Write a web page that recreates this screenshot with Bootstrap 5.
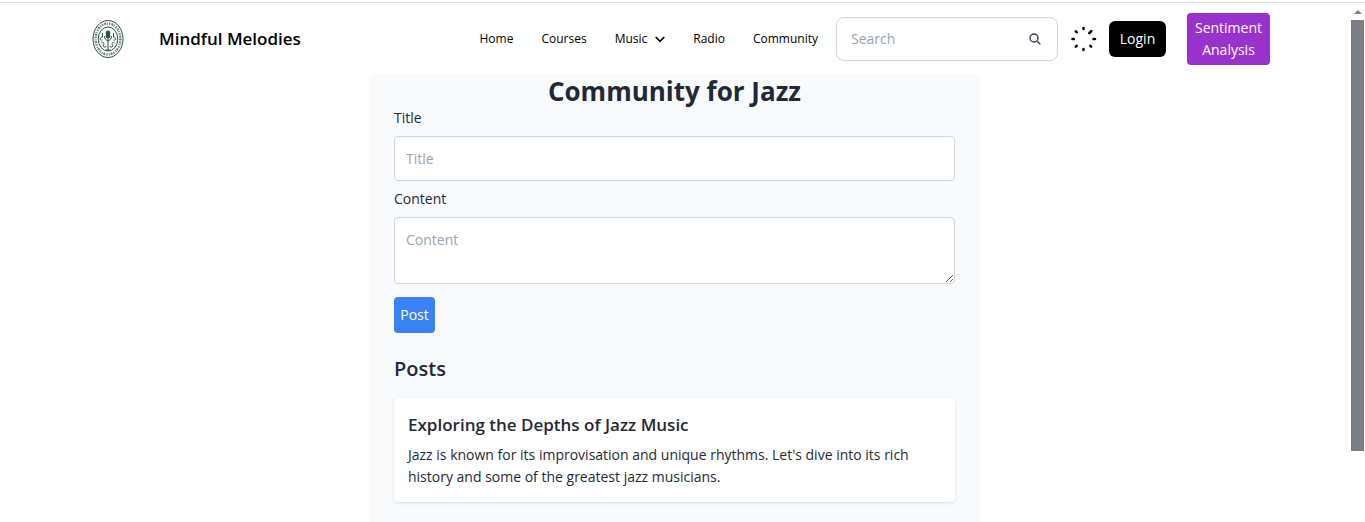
<!DOCTYPE html>
<html lang="en">
<head>
<meta charset="utf-8">
<meta name="viewport" content="width=device-width, initial-scale=1">
<title>Mindful Melodies</title>
<link href="https://cdn.jsdelivr.net/npm/bootstrap@5.3.0/dist/css/bootstrap.min.css" rel="stylesheet">
<style>
  html, body { height: 100%; overflow: hidden; }
  body { font-family: "Open Sans", "Noto Sans", sans-serif; font-size: 14px; line-height: 22px; color: #1f2937; background: #fff; }
  .top-rule { height: 3px; flex: none; border-top: 2px solid #fff; background: #e0e0e0; }
  .page-row { min-height: 0; }
  .site-header { height: 72px; flex: none; padding: 0 79px 0 92px; }
  .brand-name { font-size: 17px; line-height: 28px; font-weight: 600; color: #000; margin-left: 35px; }
  .site-links { gap: 28px; font-size: 12px; margin-right: 18px; }
  .site-links a { color: #000; text-decoration: none; }
  .search-box { width: 222px; height: 44px; border: 1px solid #d1d5db; border-radius: 8px; padding: 0 16px 0 14px; }
  .search-box input { border: 0; outline: 0; min-width: 0; padding: 0; background: none; }
  .search-box button { border: 0; padding: 0; background: none; display: flex; }
  ::placeholder { color: #9ca3af !important; opacity: 1; }
  .btn { font-size: 14px; line-height: 22px; border: 0; color: #fff; }
  .btn-login { background: #000; border-radius: 6px; width: 57px; height: 36px; padding: 0; }
  .btn-mood { background: #9932cc; border-radius: 4px; width: 83px; height: 52px; padding: 4px 0; margin-left: 21px; }
  .community { width: 609px; max-width: 100%; background: #f9fafb; padding: 0 24px; box-shadow: 0 1px 2px rgba(0,0,0,.06); }
  .community h1 { font-size: 26px; line-height: 31px; font-weight: 700; margin: 1px 0 0; }
  .community h2 { font-size: 20px; line-height: 28px; font-weight: 600; margin: 22px 0 15px; }
  .community h3 { font-size: 17px; line-height: 26px; font-weight: 600; margin: 0 0 6px; }
  .community .form-label { margin: 0 0 7px; display: block; }
  .community .form-control { font-size: 14px; line-height: 22px; padding: 11px; border: 1px solid #d1d5db; border-radius: 4px; min-height: 0; color: #1f2937; }
  .community input.form-control { height: 45px; margin-bottom: 7px; }
  .community textarea.form-control { height: 67px; margin-bottom: 13px; }
  .btn-post { background: #3b82f6; border-radius: 4px; width: 41px; height: 36px; padding: 0; }
  .post-item { background: #fff; border-radius: 4px; padding: 14px; box-shadow: 0 1px 3px rgba(0,0,0,.12); }
  .scroll-rail { width: 16px; flex: none; padding: 0 1px 0 2px; }
  .scroll-arrow { height: 17px; flex: none; display: flex; align-items: center; justify-content: center; }
  .scroll-thumb { height: 83%; background: #7b8087; }
</style>
</head>
<body class="d-flex flex-column">
<div class="top-rule"></div>
<div class="page-row d-flex flex-grow-1">
  <div class="d-flex flex-column flex-grow-1 overflow-hidden">
    <header class="site-header d-flex align-items-center">
      <a href="#" class="d-flex align-items-center text-decoration-none">
        <svg width="32" height="40" viewBox="0 0 32 40" fill="none" stroke="#2f5149" aria-hidden="true">
          <ellipse cx="16" cy="20" rx="15" ry="18.5" stroke-width="1"/>
          <ellipse cx="16" cy="20" rx="12.4" ry="15.5" stroke="#6d877f" stroke-width="2.4" stroke-dasharray="1.4 1 2 .8 1 1.2"/>
          <ellipse cx="16" cy="20" rx="9.8" ry="12" stroke-width="1"/>
          <rect x="13.8" y="11.5" width="4.4" height="8" rx="2.2" fill="#2f5149" stroke="none"/>
          <path d="M16 19v12M12.5 17c0 6 7 6 7 0M13.5 31h5M10.5 14v4c-3 0-3 4 0 3M21.500 14v4c3 0 3 4 0 3M9.500 24c2-1.500 3 0 2 2s2 3 3 1M22.500 24c-2-1.500-3 0-2 2s-2 3-3 1" stroke-width="1"/>
        </svg>
        <span class="brand-name">Mindful Melodies</span>
      </a>
      <nav class="site-links d-flex align-items-center ms-auto">
        <a href="#">Home</a>
        <a href="#">Courses</a>
        <a href="#" class="d-flex align-items-center">Music
          <svg class="ms-2" width="10" height="7" viewBox="0 0 10 7" fill="none" stroke="#000" stroke-width="1.700" aria-hidden="true"><path d="M.7 1 5 5.400 9.300 1"/></svg>
        </a>
        <a href="#">Radio</a>
        <a href="#">Community</a>
      </nav>
      <form class="search-box d-flex align-items-center">
        <input type="search" class="flex-grow-1" placeholder="Search" aria-label="Search">
        <button type="button" aria-label="Submit search">
          <svg width="12" height="12" viewBox="0 0 12 12" fill="none" stroke="#374151" stroke-width="1.400"><circle cx="5" cy="5" r="4"/><path d="m8 8 3.300 3.300"/></svg>
        </button>
      </form>
      <svg class="mx-2 px-1" width="35" height="26" viewBox="0 0 26 26" fill="none" stroke="#000" stroke-width="2.500" stroke-linecap="round" aria-hidden="true">
        <path d="M13 2v1M13 23v1M2 13h1.300M23 13h1.500M5.300 5.300l.9.900M18.800 7.200 20.800 5.200M5.300 20.700l.9-.9M19.800 19.800l.9.900"/>
      </svg>
      <button type="button" class="btn btn-login">Login</button>
      <button type="button" class="btn btn-mood">Sentiment Analysis</button>
    </header>
    <main class="community mx-auto flex-grow-1">
      <h1 class="text-center">Community for Jazz</h1>
      <form>
        <label class="form-label" for="post-title">Title</label>
        <input type="text" id="post-title" class="form-control" placeholder="Title">
        <label class="form-label" for="post-content">Content</label>
        <textarea id="post-content" class="form-control" placeholder="Content"></textarea>
        <button type="button" class="btn btn-post">Post</button>
      </form>
      <h2>Posts</h2>
      <article class="post-item">
        <h3>Exploring the Depths of Jazz Music</h3>
        <p class="mb-0">Jazz is known for its improvisation and unique rhythms. Let's dive into its rich history and some of the greatest jazz musicians.</p>
      </article>
    </main>
  </div>
  <div class="scroll-rail d-flex flex-column" aria-hidden="true">
    <div class="scroll-arrow"><svg width="8" height="4" viewBox="0 0 8 4"><path d="M0 4 4 0l4 4z" fill="#7b8087"/></svg></div>
    <div class="scroll-thumb"></div>
  </div>
</div>
<script src="https://cdn.jsdelivr.net/npm/bootstrap@5.3.0/dist/js/bootstrap.bundle.min.js"></script>
</body>
</html>
